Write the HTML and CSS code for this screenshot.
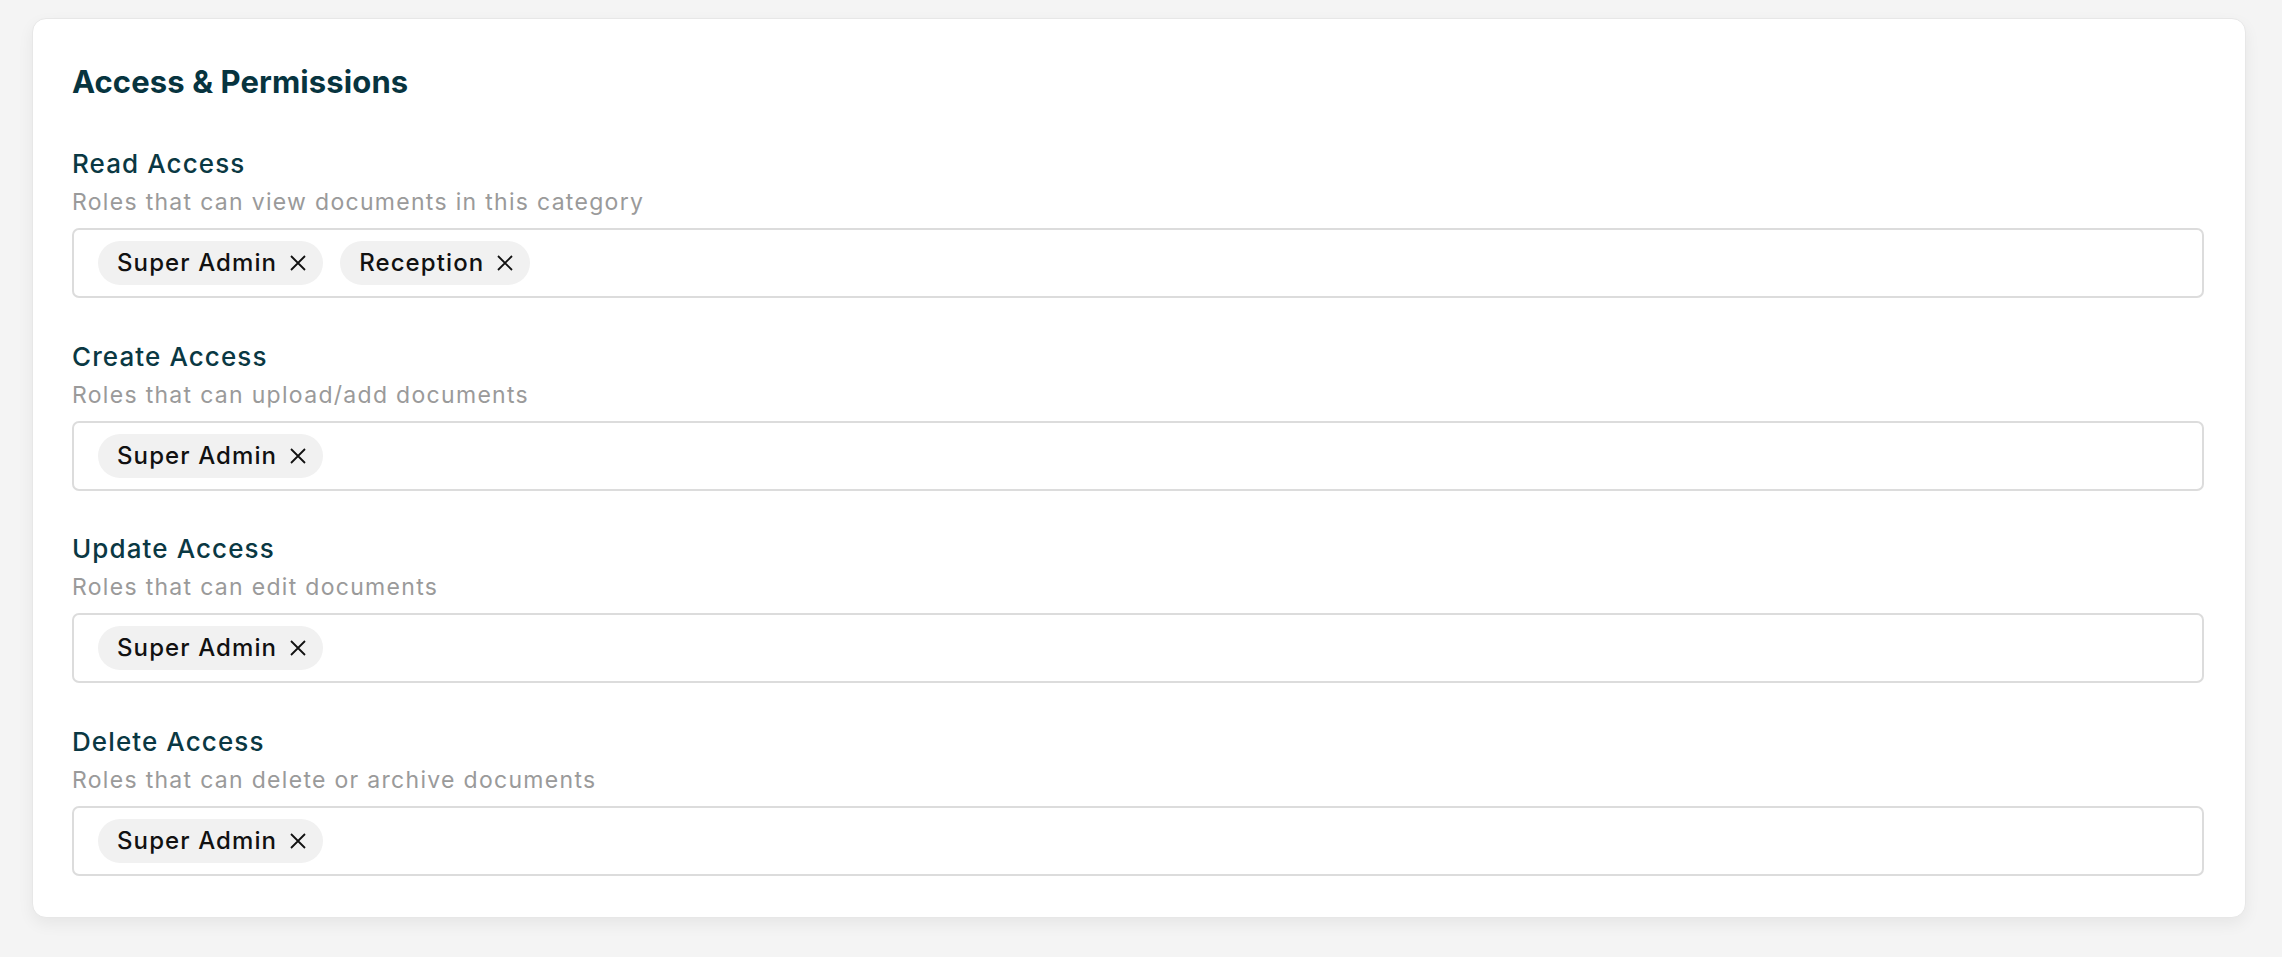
FILE: index.html
```html
<!DOCTYPE html>
<html lang="en">
<head>
<meta charset="utf-8">
<title>Access &amp; Permissions</title>
<link rel="stylesheet" href="styles.css">
</head>
<body>
<div class="page">
  <section class="card">
    <h2 class="card-title">Access &amp; Permissions</h2>
    <div class="fields">
      <div class="field">
        <div class="field-label">Read Access</div>
        <div class="field-help">Roles that can view documents in this category</div>
        <div class="tag-input">
          <span class="chip"><span class="chip-text">Super Admin</span><svg class="chip-x" viewBox="0 0 16 16"><path d="M1 1L15 15M15 1L1 15"/></svg></span>
          <span class="chip"><span class="chip-text">Reception</span><svg class="chip-x" viewBox="0 0 16 16"><path d="M1 1L15 15M15 1L1 15"/></svg></span>
        </div>
      </div>
      <div class="field">
        <div class="field-label">Create Access</div>
        <div class="field-help">Roles that can upload/add documents</div>
        <div class="tag-input">
          <span class="chip"><span class="chip-text">Super Admin</span><svg class="chip-x" viewBox="0 0 16 16"><path d="M1 1L15 15M15 1L1 15"/></svg></span>
        </div>
      </div>
      <div class="field">
        <div class="field-label">Update Access</div>
        <div class="field-help">Roles that can edit documents</div>
        <div class="tag-input">
          <span class="chip"><span class="chip-text">Super Admin</span><svg class="chip-x" viewBox="0 0 16 16"><path d="M1 1L15 15M15 1L1 15"/></svg></span>
        </div>
      </div>
      <div class="field">
        <div class="field-label">Delete Access</div>
        <div class="field-help">Roles that can delete or archive documents</div>
        <div class="tag-input">
          <span class="chip"><span class="chip-text">Super Admin</span><svg class="chip-x" viewBox="0 0 16 16"><path d="M1 1L15 15M15 1L1 15"/></svg></span>
        </div>
      </div>
    </div>
  </section>
</div>
</body>
</html>
```
FILE: styles.css
```css
* { box-sizing: border-box; }

html, body {
  margin: 0;
  padding: 0;
  background: #f4f4f4;
}

body {
  font-family: "Inter", "Noto Sans", "Liberation Sans", sans-serif;
  color: #111;
}

.page {
  padding: 18px 36px 40px 32px;
}

.card {
  background: #ffffff;
  border: 1px solid #e7e7e7;
  border-radius: 14px;
  box-shadow: 0 6px 16px rgba(0, 0, 0, 0.06);
  padding: 44px 41px 41px 39px;
}

.card-title {
  margin: 0;
  font-size: 31px;
  line-height: 38px;
  font-weight: 700;
  letter-spacing: 0.1px;
  color: #07343f;
}

.fields {
  margin-top: 47px;
  display: flex;
  flex-direction: column;
  gap: 42.6px;
}

.field {
  display: flex;
  flex-direction: column;
}

.field-label {
  font-size: 26px;
  line-height: 32px;
  font-weight: 500;
  letter-spacing: 1.1px;
  color: #0a3843;
}

.field-help {
  margin-top: 8px;
  font-size: 23px;
  line-height: 28px;
  letter-spacing: 1.3px;
  color: #9a9a9a;
}

.tag-input {
  margin-top: 12px;
  height: 70px;
  border: 2px solid #dcdcdc;
  border-radius: 7px;
  padding: 11px 24px;
  display: flex;
  align-items: center;
  gap: 17px;
}

.chip {
  height: 44px;
  border-radius: 22px;
  background: #f1f1f1;
  padding: 0 17px 0 19px;
  display: inline-flex;
  align-items: center;
  gap: 13px;
}

.chip-text {
  font-size: 24px;
  line-height: 28px;
  font-weight: 500;
  letter-spacing: 1.1px;
  color: #111111;
}

.chip-x {
  width: 16px;
  height: 16px;
  fill: none;
  stroke: #111111;
  stroke-width: 1.8;
  stroke-linecap: butt;
}
```
